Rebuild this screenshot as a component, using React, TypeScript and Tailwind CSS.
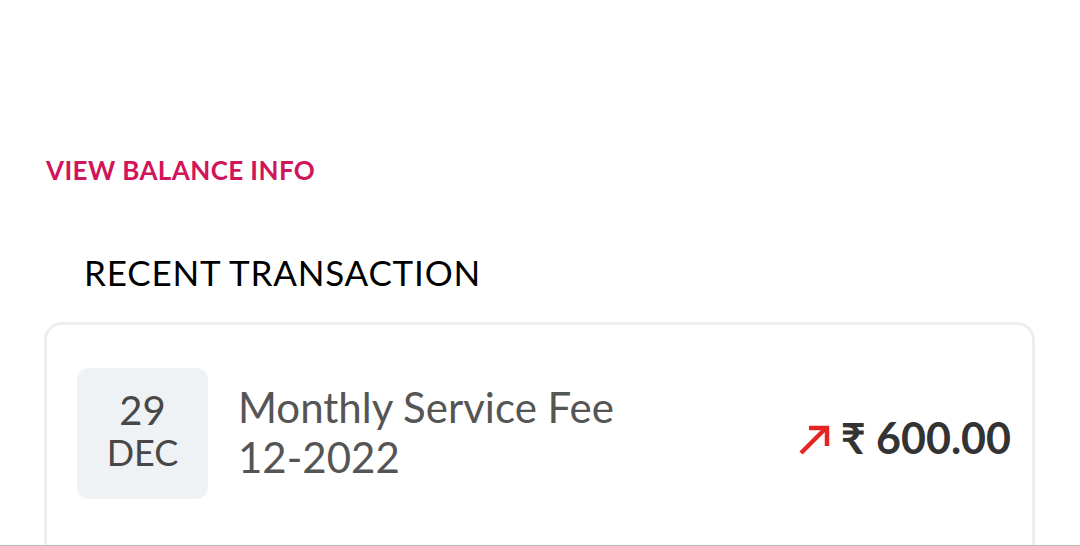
import React from "react";

export default function App() {
  return (
    <div
      className="relative w-[1080px] h-[546px] overflow-hidden bg-white"
      style={{ fontFamily: "Lato, 'Noto Sans', sans-serif" }}
    >
      <div className="pt-[153px] pl-[46px]">
        <div className="text-[26px] leading-[34px] font-bold text-[#d0155b] tracking-[0.4px]">
          VIEW BALANCE INFO
        </div>
      </div>
      <div className="pl-[84px] mt-[65px] text-[35px] leading-[40px] text-black tracking-[0.8px]">
        RECENT TRANSACTION
      </div>
      <div className="ml-[44px] mt-[30px] w-[991px] h-[300px] rounded-[18px] border-[3px] border-[#eeeeee] bg-white">
        <div className="flex items-center pl-[30px] pr-[21px] pt-[43px]">
          <div className="w-[131px] h-[131px] rounded-[12px] bg-[#eff2f5] flex flex-col items-center justify-center text-[#474747]">
            <div className="text-[40px] leading-[42px] mt-[-6px]">29</div>
            <div className="text-[36px] leading-[42px]">DEC</div>
          </div>
          <div className="ml-[30px] text-[42px] leading-[50px] text-[#555555] mt-[-4px]">
            <div>Monthly Service Fee</div>
            <div>12-2022</div>
          </div>
          <div className="ml-auto flex items-center gap-[11px] mt-[8px]">
            <svg width="32" height="32" viewBox="0 0 32 32" className="mt-[2px]">
              <path d="M3 30 L27 6" stroke="#e62424" strokeWidth="4.5" fill="none" />
              <path d="M11 5 H29 V23" stroke="#e62424" strokeWidth="4.5" fill="none" />
            </svg>
            <div className="text-[43px] leading-[50px] font-bold text-[#333333]">₹ 600.00</div>
          </div>
        </div>
      </div>
      <div className="absolute left-0 right-0 bottom-0 h-[1px] bg-[#b8b8b8]" />
    </div>
  );
}
